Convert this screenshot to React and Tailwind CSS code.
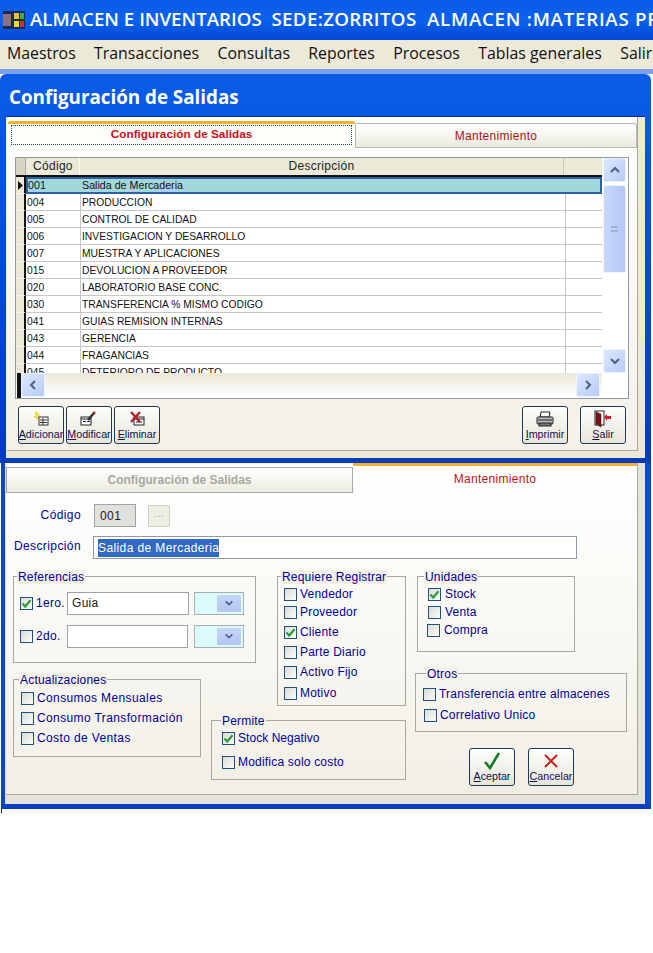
import React from "react";

const rows = [
  ["001", "Salida de Mercaderia"],
  ["004", "PRODUCCION"],
  ["005", "CONTROL DE CALIDAD"],
  ["006", "INVESTIGACION Y DESARROLLO"],
  ["007", "MUESTRA Y APLICACIONES"],
  ["015", "DEVOLUCION A PROVEEDOR"],
  ["020", "LABORATORIO BASE CONC."],
  ["030", "TRANSFERENCIA % MISMO CODIGO"],
  ["041", "GUIAS REMISION INTERNAS"],
  ["043", "GERENCIA"],
  ["044", "FRAGANCIAS"],
  ["045", "DETERIORO DE PRODUCTO"],
];

function Chevron({ dir }) {
  const d = {
    up: "M2 8 L6 4 L10 8",
    down: "M2 4 L6 8 L10 4",
    left: "M8 2 L4 6 L8 10",
    right: "M4 2 L8 6 L4 10",
  }[dir];
  return (
    <svg width="12" height="12" viewBox="0 0 12 12" fill="none">
      <path d={d} stroke="#4d6185" strokeWidth="2" />
    </svg>
  );
}

function ScrollBtn({ dir, className }) {
  return (
    <div className={"flex items-center justify-center rounded-[2px] border border-[#eef3fe] bg-gradient-to-br from-[#dde8fe] to-[#b6cbf6] " + className}>
      <Chevron dir={dir} />
    </div>
  );
}

function Check({ checked, className = "" }) {
  return (
    <span className={"flex h-[13px] w-[13px] shrink-0 items-center justify-center border border-[#1c5180] bg-gradient-to-br from-[#dcdcd6] to-[#fbfbf8] " + className}>
      {checked && (
        <svg width="11" height="11" viewBox="0 0 11 11" fill="none">
          <path d="M1.5 5.5 L4.2 8.5 L9.5 2.2" stroke="#2f9a3c" strokeWidth="2.2" />
        </svg>
      )}
    </span>
  );
}

function Opt({ label, checked, className = "" }) {
  return (
    <div className={"flex h-[14px] items-center gap-[3px] whitespace-nowrap text-[12px] leading-none tracking-[0.2px] text-[#00009a] " + className}>
      <Check checked={checked} />
      <span>{label}</span>
    </div>
  );
}

function Group({ title, className = "", titleClass = "", children }) {
  return (
    <div className={"relative border border-[#a9a89f] " + className}>
      <span className={"absolute top-[-7px] bg-[#f3f1e6] px-[1px] text-[12px] leading-[14px] tracking-[0.2px] text-[#00009a] " + titleClass}>
        {title}
      </span>
      {children}
    </div>
  );
}

const Ico = {
  add: (
    <svg width="16" height="16" viewBox="0 0 16 16">
      <path d="M4 0 L5 3 L8 2 L6 5 L8 7 L5 7 L4 10 L3 7 L0 6 L3 4 L1 2 Z" fill="#e8d850" />
      <rect x="6" y="6" width="9" height="8" fill="#fff" stroke="#333" />
      <path d="M7 9h7M7 11.5h7M10 7v7" stroke="#333" />
    </svg>
  ),
  edit: (
    <svg width="18" height="16" viewBox="0 0 18 16">
      <rect x="1" y="6" width="10" height="8" fill="#fff" stroke="#222" />
      <path d="M1 8h10M3 10.5h3M7 10.5h3" stroke="#222" />
      <path d="M8 9 L14 2" stroke="#333" strokeWidth="2.5" />
      <path d="M13.5 2.5 L15 1" stroke="#d02020" strokeWidth="2.5" />
    </svg>
  ),
  del: (
    <svg width="16" height="16" viewBox="0 0 16 16">
      <rect x="5" y="6" width="10" height="8" fill="#fff" stroke="#222" />
      <path d="M5 8h10M7 11h6" stroke="#222" />
      <path d="M2 1 L11 11 M11 1 L2 11" stroke="#b02030" strokeWidth="2.4" />
    </svg>
  ),
  print: (
    <svg width="18" height="16" viewBox="0 0 18 16">
      <path d="M5 1h9l-1 5H4z" fill="#fff" stroke="#222" />
      <rect x="1" y="6" width="16" height="7" rx="1" fill="#bbb" stroke="#222" />
      <path d="M2 9h14" stroke="#222" />
      <rect x="3" y="12" width="12" height="3" fill="#777" stroke="#222" />
    </svg>
  ),
  exit: (
    <svg width="18" height="18" viewBox="0 0 18 18">
      <rect x="1" y="1" width="9" height="14" fill="#fff" stroke="#222" />
      <path d="M2 2 L7 4 V17 L2 14 Z" fill="#7a1418" stroke="#300" strokeWidth="0.5" />
      <path d="M10 7 L13 4 V6 H17 V9 H13 V11 Z" fill="#d81828" />
    </svg>
  ),
  ok: (
    <svg width="18" height="18" viewBox="0 0 18 18" fill="none">
      <path d="M2 10 L7 16 L16 1" stroke="#157a25" strokeWidth="2.6" />
    </svg>
  ),
  cancel: (
    <svg width="16" height="16" viewBox="0 0 16 16" fill="none">
      <path d="M2 2 L14 14 M14 2 L2 14" stroke="#c81e1e" strokeWidth="2" />
    </svg>
  ),
};

function ActionBtn({ icon, u, rest, className = "" }) {
  return (
    <button className={"flex h-[38px] w-[46px] flex-col items-center justify-end overflow-hidden rounded-[3px] border border-[#1c3a5c] bg-gradient-to-b from-[#fdfdfb] to-[#e8e6da] pb-[3px] text-[10.7px] leading-[12px] text-[#101050] " + className}>
      <span className="flex h-[18px] items-center">{icon}</span>
      <span className="whitespace-nowrap">
        <span className="underline">{u}</span>
        {rest}
      </span>
    </button>
  );
}

function Combo() {
  return (
    <div className="flex h-[23px] w-[50px] items-center justify-end border border-[#a9aeb2] bg-[#dbfbfd] p-[2px]">
      <div className="flex h-[17px] w-[24px] items-center justify-center rounded-[1px] bg-gradient-to-b from-[#c6d6f8] to-[#b2c6f2]">
        <svg width="10" height="10" viewBox="0 0 12 12" fill="none">
          <path d="M2 4 L6 8 L10 4" stroke="#4d6185" strokeWidth="2" />
        </svg>
      </div>
    </div>
  );
}

export default function App() {
  return (
    <div className="h-[953px] w-[653px] overflow-hidden bg-white font-['Liberation_Sans',sans-serif]">
      {/* Application title */}
      <div className="flex h-[40px] items-center overflow-hidden bg-gradient-to-b from-[#0a5ae6] via-[#0a62ee] to-[#0448d4] pl-[3px] pb-[1px]">
        <svg width="22" height="18" viewBox="0 0 22 18" className="shrink-0">
          <rect width="22" height="18" fill="#1a2a5a" />
          <rect x="0" y="3" width="8" height="12" fill="#8a7080" />
          <rect x="11" y="2" width="5" height="6" fill="#f0c020" />
          <rect x="17" y="2" width="4" height="6" fill="#40b040" />
          <rect x="11" y="10" width="5" height="6" fill="#e8e020" />
          <rect x="17" y="10" width="4" height="6" fill="#d03030" />
        </svg>
        <span className="ml-[5px] whitespace-pre font-['Open_Sans',sans-serif] text-[18.7px] font-semibold leading-none text-white">
          <span>{"ALMACEN E INVENTARIOS  "}</span>
          <span className="tracking-[0.35px]">{"SEDE:ZORRITOS  "}</span>
          <span className="tracking-[0.75px]">{"ALMACEN :MATERIAS PRIMAS"}</span>
        </span>
      </div>

      {/* Menu */}
      <div className="flex h-[29px] items-center gap-[18.4px] overflow-hidden whitespace-nowrap bg-[#ece9d8] pb-[2px] pl-[7px] font-['Open_Sans',sans-serif] text-[15.85px] leading-none text-[#111]">
        <span>Maestros</span>
        <span>Transacciones</span>
        <span>Consultas</span>
        <span>Reportes</span>
        <span>Procesos</span>
        <span>Tablas generales</span>
        <span>Salir</span>
      </div>

      <div className="h-[5px] bg-[#7ba2e7]" />

      {/* Upper window */}
      <div className="h-[389px] w-[651px] rounded-tl-[6px] rounded-tr-[6px] bg-gradient-to-b from-[#0a5ce8] to-[#023cb8]">
        <div className="flex h-[42px] items-center pl-[9px] pt-[4px] font-['Open_Sans',sans-serif] text-[18.8px] font-bold leading-none text-white">
          Configuración de Salidas
        </div>
        <div className="mx-[6px] h-[342px] border-t border-[#0a2f90] bg-[#ece9d8] pl-[1px] pr-[7px]">
          <div className="h-[334px] border-b border-r border-[#a9a89f] bg-gradient-to-b from-white to-[#f3f1e8]">
            {/* Tabs */}
            <div className="flex h-[32px] pt-[4px]">
              <div className="ml-[1px] h-[28px] w-[347px] rounded-t-[2px] border-t-[3px] border-[#f8b030] bg-[#fffefa] px-[3px] pt-[1px]">
                <div className="flex h-[20px] items-center justify-center border border-dotted border-[#0a5a6a] text-[11.8px] font-bold text-[#d01020]">
                  Configuración de Salidas
                </div>
              </div>
              <div className="mt-[2px] flex h-[25px] flex-1 items-center justify-center rounded-t-[2px] border border-[#b8b7ae] bg-gradient-to-b from-white to-[#ecebe0] text-[12px] tracking-[0.3px] text-[#b01020]">
                Mantenimiento
              </div>
            </div>

            {/* Table */}
            <div className="ml-[8px] mt-[8px] h-[242px] w-[614px] border border-[#8e99a6] bg-white">
              <div className="flex h-[215px]">
                <div className="h-[215px] w-[587px] overflow-hidden">
                  <div className="flex h-[19px] border-b-2 border-[#111] bg-[#ece9d8] text-[12px] leading-[17px] tracking-[0.3px] text-[#222]">
                    <div className="w-[10px] border-r border-[#aaa] bg-[#d8d5c4]" />
                    <div className="w-[54px] border-r border-[#fdfdf8] pl-[7px]">Código</div>
                    <div className="w-[484px] border-r border-[#c8c6b8] text-center">Descripción</div>
                    <div className="flex-1" />
                  </div>
                  {rows.map((r, i) => (
                    <div key={r[0]} className="flex h-[17px] text-[10.3px] leading-[18px] text-[#111]">
                      <div className="relative flex w-[10px] items-center justify-end border-r-2 border-b border-[#111] border-b-[#f5f4ec] bg-[#ece9d8]">
                        {i === 0 && (
                          <svg width="5" height="9" viewBox="0 0 5 9" className="mr-[1px]">
                            <path d="M0 0 L5 4.5 L0 9 Z" fill="#111" />
                          </svg>
                        )}
                      </div>
                      {i === 0 ? (
                        <div className="flex flex-1 border-2 border-[#2e5f9e] bg-[#a2d8dc] text-[10.7px]">
                          <div className="w-[53px] leading-[13px]">{r[0]}</div>
                          <div className="pl-[1px] leading-[13px]">{r[1]}</div>
                        </div>
                      ) : (
                        <>
                          <div className="h-[17px] w-[54px] border-b border-[#c6c6c6] pl-[1px]">{r[0]}</div>
                          <div className="h-[17px] w-[485px] border-b border-l border-[#c6c6c6] pl-[1px]">{r[1]}</div>
                          <div className="h-[17px] flex-1 border-b border-l border-[#c6c6c6]" />
                        </>
                      )}
                    </div>
                  ))}
                </div>
                <div className="flex w-[26px] flex-col pl-[1px] pr-[2px]">
                  <ScrollBtn dir="up" className="h-[24px]" />
                  <div className="mt-[3px] flex h-[88px] items-center justify-center rounded-[2px] border border-[#eef3fe] bg-gradient-to-r from-[#c8d8fb] to-[#b4c8f6]">
                    <div className="h-[6px] w-[7px] border-y-2 border-[#a0b0d0]" />
                  </div>
                  <div className="flex-1" />
                  <ScrollBtn dir="down" className="h-[24px]" />
                </div>
              </div>
              <div className="flex h-[25px]">
                <div className="flex flex-1 bg-gradient-to-b from-[#ece9d8] to-white">
                  <div className="ml-[1px] h-[25px] w-[4px] bg-[#111]" />
                  <ScrollBtn dir="left" className="h-[24px] w-[24px]" />
                  <div className="flex-1" />
                  <ScrollBtn dir="right" className="mr-[2px] h-[24px] w-[24px]" />
                </div>
                <div className="w-[26px]" />
              </div>
            </div>

            {/* Actions */}
            <div className="ml-[11px] mr-[11px] mt-[7px] flex gap-[2px]">
              <ActionBtn icon={Ico.add} u="A" rest="dicionar" />
              <ActionBtn icon={Ico.edit} u="M" rest="odificar" />
              <ActionBtn icon={Ico.del} u="E" rest="liminar" />
              <div className="flex-1" />
              <ActionBtn icon={Ico.print} u="I" rest="mprimir" />
              <ActionBtn icon={Ico.exit} u="S" rest="alir" className="ml-[10px]" />
            </div>
          </div>
        </div>
      </div>

      {/* Lower window */}
      <div className="ml-[1px] h-[346px] w-[650px] border-b-[5px] border-[#0a3fc0] bg-[#0a48d0] pl-[4px] pr-[6px]">
        <div className="h-[341px] bg-[#e4e3da] pr-[7px] pl-[1px]">
          <div className="h-[332px] border-b border-r border-[#a9a89f] bg-gradient-to-b from-white via-[#f9f8f4] to-[#f1efe5]">
            {/* Tabs */}
            <div className="flex h-[30px]">
              <div className="mt-[4px] flex h-[26px] w-[347px] items-center justify-center border border-[#a9a89f] bg-gradient-to-b from-white to-[#ecebe0] text-[12px] font-bold text-[#a8a8a0]">
                Configuración de Salidas
              </div>
              <div className="flex h-[30px] flex-1 items-start justify-center border-t-[3px] border-[#f8b030] pt-[6px] text-[12px] leading-[14px] tracking-[0.3px] text-[#c01020]">
                Mantenimiento
              </div>
            </div>

            {/* Código */}
            <div className="mt-[11px] flex h-[23px] items-center text-[12px] tracking-[0.4px] text-[#00009a]">
              <div className="mb-[2px] w-[75px] text-right">Código</div>
              <div className="ml-[13px] flex h-[23px] w-[42px] items-center border border-[#a0a4a8] bg-[#e0e0dc] pl-[5px] text-[#222]">
                001
              </div>
              <div className="ml-[12px] flex h-[22px] w-[22px] items-center justify-center rounded-[2px] border border-[#cfcdc0] bg-[#efeee6] pb-[4px] text-[10px] text-[#999]">
                ...
              </div>
            </div>

            {/* Descripción */}
            <div className="mt-[9px] flex h-[23px] items-center text-[12px] tracking-[0.4px] text-[#00009a]">
              <div className="mb-[4px] w-[75px] text-right">Descripción</div>
              <div className="ml-[12px] flex h-[23px] w-[484px] items-center border border-[#8e99a6] bg-white pl-[4px]">
                <span className="bg-[#316ac5] text-white">Salida de Mercaderia</span>
              </div>
            </div>

            {/* Groups */}
            <div className="mt-[17px] flex items-start pl-[7px]">
              <div className="w-[243px]">
                <Group title="Referencias" className="h-[87px] w-[243px]" titleClass="left-[3px]">
                  <div className="mt-[14px] flex h-[24px] items-center pl-[6px] text-[12px] tracking-[0.3px] text-[#00009a]">
                    <Check checked />
                    <span className="ml-[3px] w-[31px]">1ero.</span>
                    <div className="flex h-[23px] w-[122px] items-center border border-[#9aa2aa] bg-white pl-[4px] text-[#222]">Guia</div>
                    <div className="ml-[5px]"><Combo /></div>
                  </div>
                  <div className="mt-[9px] flex h-[24px] items-center pl-[6px] text-[12px] tracking-[0.3px] text-[#00009a]">
                    <Check />
                    <span className="ml-[3px] w-[31px]">2do.</span>
                    <div className="h-[23px] w-[121px] border border-[#9aa2aa] bg-white" />
                    <div className="ml-[6px]"><Combo /></div>
                  </div>
                </Group>
                <Group title="Actualizaciones" className="mt-[16px] h-[78px] w-[188px]" titleClass="left-[5px]">
                  <div className="flex flex-col gap-[6px] pl-[7px] pt-[11px]">
                    <Opt label="Consumos Mensuales" className="tracking-[0.38px]" />
                    <Opt label="Consumo Transformación" className="tracking-[0.38px]" />
                    <Opt label="Costo de Ventas" className="tracking-[0.38px]" />
                  </div>
                </Group>
              </div>

              <div className="ml-[-45px] flex w-[195px] flex-col items-end">
                <Group title="Requiere Registrar" className="h-[130px] w-[129px]" titleClass="left-[3px]">
                  <div className="flex flex-col pl-[6px] pt-[10px]">
                    <Opt label="Vendedor" />
                    <Opt label="Proveedor" className="mt-[4px]" />
                    <Opt label="Cliente" checked className="mt-[6px]" />
                    <Opt label="Parte Diario" className="mt-[6px]" />
                    <Opt label="Activo Fijo" className="mt-[6px]" />
                    <Opt label="Motivo" className="mt-[7px]" />
                  </div>
                </Group>
                <Group title="Permite" className="mt-[14px] h-[60px] w-[195px]" titleClass="left-[9px]">
                  <div className="flex flex-col pl-[10px] pt-[10px]">
                    <Opt label="Stock Negativo" checked className="tracking-[0.05px]" />
                    <Opt label="Modifica solo costo" className="mt-[10px]" />
                  </div>
                </Group>
              </div>

              <div className="ml-[9px] flex w-[212px] flex-col">
                <Group title="Unidades" className="ml-[2px] h-[76px] w-[158px]" titleClass="left-[6px]">
                  <div className="flex flex-col pl-[10px] pt-[10px]">
                    <Opt label="Stock" checked className="gap-[4px]" />
                    <Opt label="Venta" className="mt-[4px] gap-[4px]" />
                    <Opt label="Compra" className="ml-[-1px] mt-[4px] gap-[4px]" />
                  </div>
                </Group>
                <Group title="Otros" className="mt-[21px] h-[59px] w-[212px]" titleClass="left-[10px]">
                  <div className="flex flex-col pl-[7px] pt-[13px]">
                    <Opt label="Transferencia entre almacenes" />
                    <Opt label="Correlativo Unico" className="ml-[1px] mt-[7px]" />
                  </div>
                </Group>
                <div className="ml-[54px] mt-[16px] flex gap-[13px]">
                  <ActionBtn icon={Ico.ok} u="A" rest="ceptar" />
                  <ActionBtn icon={Ico.cancel} u="C" rest="ancelar" />
                </div>
              </div>
            </div>
          </div>
        </div>
      </div>
      <div className="ml-[1px] h-[4px] w-[1px] bg-[#222]" />
    </div>
  );
}
